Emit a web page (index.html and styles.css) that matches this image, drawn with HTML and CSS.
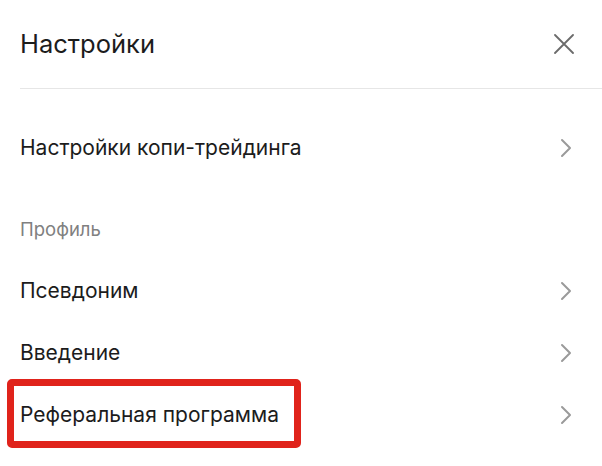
FILE: index.html
```html
<!DOCTYPE html>
<html lang="ru">
<head>
<meta charset="utf-8">
<link rel="stylesheet" href="styles.css">
</head>
<body>
<div class="panel">
  <header class="header">
    <h1 class="title">Настройки</h1>
    <button class="close" aria-label="Закрыть">
      <svg width="20" height="20" viewBox="0 0 20 20"><path d="M1 1 L19 19 M19 1 L1 19" stroke="#6b6b6b" stroke-width="1.8" fill="none" stroke-linecap="round"/></svg>
    </button>
  </header>
  <div class="list">
    <div class="row"><span class="label">Настройки копи-трейдинга</span><svg class="chev" width="12" height="20" viewBox="0 0 12 20"><path d="M2 2 L10 10 L2 18" stroke="#9a9a9a" stroke-width="2" fill="none" stroke-linecap="round" stroke-linejoin="round"/></svg></div>
    <div class="section">Профиль</div>
    <div class="row"><span class="label">Псевдоним</span><svg class="chev" width="12" height="20" viewBox="0 0 12 20"><path d="M2 2 L10 10 L2 18" stroke="#9a9a9a" stroke-width="2" fill="none" stroke-linecap="round" stroke-linejoin="round"/></svg></div>
    <div class="row"><span class="label">Введение</span><svg class="chev" width="12" height="20" viewBox="0 0 12 20"><path d="M2 2 L10 10 L2 18" stroke="#9a9a9a" stroke-width="2" fill="none" stroke-linecap="round" stroke-linejoin="round"/></svg></div>
    <div class="row highlighted"><span class="label">Реферальная программа</span><svg class="chev" width="12" height="20" viewBox="0 0 12 20"><path d="M2 2 L10 10 L2 18" stroke="#9a9a9a" stroke-width="2" fill="none" stroke-linecap="round" stroke-linejoin="round"/></svg><span class="mark"></span></div>
  </div>
</div>
</body>
</html>
```
FILE: styles.css
```css
* { box-sizing: border-box; }
html, body { margin: 0; padding: 0; background: #fff; }
body { font-family: Inter, Roboto, "Noto Sans", "Liberation Sans", sans-serif; color: #1c1c1c; }
.panel { width: 602px; height: 466px; overflow: hidden; padding-left: 20px; }
.header { height: 89px; display: flex; align-items: center; justify-content: space-between; border-bottom: 1px solid #e6e6e6; padding-right: 28px; padding-bottom: 1px; }
.title { margin: 0; font-size: 25.5px; font-weight: 400; line-height: 30px; color: #1c1c1c; }
.close { border: 0; background: none; padding: 0; width: 20px; height: 20px; display: flex; }
.list { padding-top: 28px; padding-right: 30px; }
.row { position: relative; height: 62px; display: flex; align-items: center; justify-content: space-between; }
.label { font-size: 21px; line-height: 24px; }
.chev { display: block; }
.section { height: 81px; padding-top: 38px; font-size: 18.5px; line-height: 24px; color: #808080; }
.mark { position: absolute; left: -13px; top: -5px; width: 294px; height: 69px; border: 7px solid #e0231b; border-radius: 5px; }
```
